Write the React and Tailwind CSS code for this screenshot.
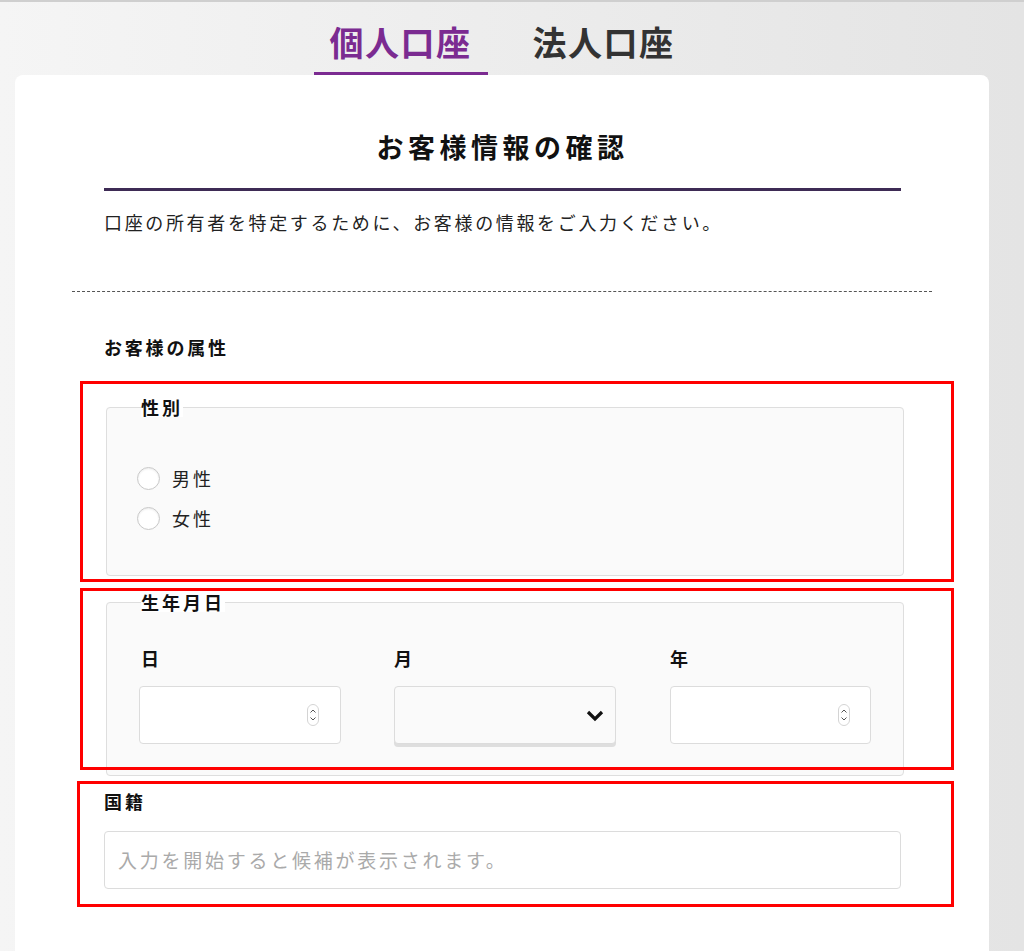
import React from "react";

const jp = { fontFamily: '"Noto Sans CJK JP", "Noto Sans", sans-serif' };

const Spinner = () => (
  <svg width="12" height="22" viewBox="0 0 12 22">
    <rect x="0.5" y="0.5" width="11" height="21" rx="5.5" fill="#fff" stroke="#d4d4d4" />
    <path d="M3.5 8.5 L6 6 L8.5 8.5" fill="none" stroke="#555" strokeWidth="1" />
    <path d="M3.5 13.5 L6 16 L8.5 13.5" fill="none" stroke="#555" strokeWidth="1" />
  </svg>
);

const Radio = ({ label }) => (
  <label className="flex items-center h-[40px] gap-[12px]">
    <span className="w-[23px] h-[23px] rounded-full border border-[#c8c8c8] bg-white shadow-[inset_0_1px_2px_rgba(0,0,0,0.08)]" />
    <span className="text-[18px] tracking-[3px] text-[#222] leading-[24px]">{label}</span>
  </label>
);

const App = () => {
  return (
    <div
      className="min-h-[951px] border-t-2 border-[#cfcfcf] bg-gradient-to-r from-[#f5f5f5] to-[#e4e4e4] overflow-hidden"
      style={jp}
    >
      {/* Tabs */}
      <div className="flex justify-center gap-[29px] h-[73px] pr-[20px]">
        <div className="w-[174px] flex flex-col items-center justify-end">
          <span className="text-[34px] font-bold tracking-[1.5px] leading-[40px] text-[#7b2b91] mb-[10px]">
            個人口座
          </span>
          <div className="w-full h-[3px] bg-[#7b2b91]" />
        </div>
        <div className="w-[174px] flex flex-col items-center justify-end">
          <span className="text-[34px] font-bold tracking-[1.5px] leading-[40px] text-[#333] mb-[13px]">
            法人口座
          </span>
        </div>
      </div>

      {/* Card */}
      <div className="relative ml-[15px] w-[974px] min-h-[876px] bg-white rounded-t-[8px] pl-[89px] pr-[88px] pt-[55px] pb-[40px]">
        <h1 className="text-center text-[27px] font-bold tracking-[4.5px] leading-[34px] text-[#111]">
          お客様情報の確認
        </h1>
        <div className="mt-[24px] h-[3px] bg-[#3e2b55]" />
        <p className="mt-[19px] text-[18px] tracking-[2.65px] leading-[24px] text-[#222]">
          口座の所有者を特定するために、お客様の情報をご入力ください。
        </p>
        <div className="mt-[57px] -ml-[32px] -mr-[31px] border-t border-dashed border-[#555]" />
        <h2 className="mt-[43px] text-[18px] font-bold tracking-[2.8px] leading-[24px] text-[#111]">
          お客様の属性
        </h2>

        {/* 性別 */}
        <fieldset className="mt-[38px] ml-[2px] w-[798px] border border-[#dedede] rounded-[4px] bg-[#fafafa] pl-[30px] pt-[41px] pb-[37px]">
          <legend className="ml-[4px] px-0 text-[18px] font-bold tracking-[3px] leading-[20px] text-[#111] bg-white">
            性別
          </legend>
          <Radio label="男性" />
          <Radio label="女性" />
        </fieldset>

        {/* 生年月日 */}
        <fieldset className="mt-[16px] ml-[2px] w-[798px] border border-[#dedede] rounded-[4px] bg-[#fafafa] pl-[32px] pt-[34px] pb-[31px]">
          <legend className="ml-[2px] px-0 text-[18px] font-bold tracking-[3px] leading-[20px] text-[#111] bg-white">
            生年月日
          </legend>
          <div className="flex">
            <div className="w-[202px]">
              <div className="text-[18px] font-bold leading-[24px] pl-[2px] text-[#111]">日</div>
              <div className="mt-[16px] h-[58px] bg-white border border-[#dcdcdc] rounded-[4px] flex items-center justify-end pr-[21px]">
                <Spinner />
              </div>
            </div>
            <div className="w-[222px] ml-[53px]">
              <div className="text-[18px] font-bold leading-[24px] text-[#111]">月</div>
              <div className="mt-[16px] h-[58px] bg-[#fafafa] border border-[#dcdcdc] rounded-[4px] shadow-[0_3px_0_#dedede] flex items-center justify-end pr-[10px]">
                <svg width="20" height="14" viewBox="0 0 20 14">
                  <path d="M3 4 L10 11 L17 4" fill="none" stroke="#111" strokeWidth="3.2" />
                </svg>
              </div>
            </div>
            <div className="w-[201px] ml-[54px]">
              <div className="text-[18px] font-bold leading-[24px] text-[#111]">年</div>
              <div className="mt-[16px] h-[58px] bg-white border border-[#dcdcdc] rounded-[4px] flex items-center justify-end pr-[20px]">
                <Spinner />
              </div>
            </div>
          </div>
        </fieldset>

        {/* 国籍 */}
        <div className="mt-[13px] text-[18px] font-bold tracking-[3px] leading-[24px] text-[#111]">国籍</div>
        <div className="mt-[18px] h-[58px] bg-white border border-[#dcdcdc] rounded-[4px] flex items-center pl-[13px]">
          <span className="text-[19px] tracking-[2.75px] text-[#aaa]">
            入力を開始すると候補が表示されます。
          </span>
        </div>

        {/* annotation boxes */}
        <div className="absolute left-[65px] top-[306px] w-[874px] h-[201px] border-[3px] border-[#ff0000] pointer-events-none" />
        <div className="absolute left-[65px] top-[513px] w-[874px] h-[182px] border-[3px] border-[#ff0000] pointer-events-none" />
        <div className="absolute left-[62px] top-[706px] w-[877px] h-[126px] border-[3px] border-[#ff0000] pointer-events-none" />
      </div>
    </div>
  );
};

export default App;
